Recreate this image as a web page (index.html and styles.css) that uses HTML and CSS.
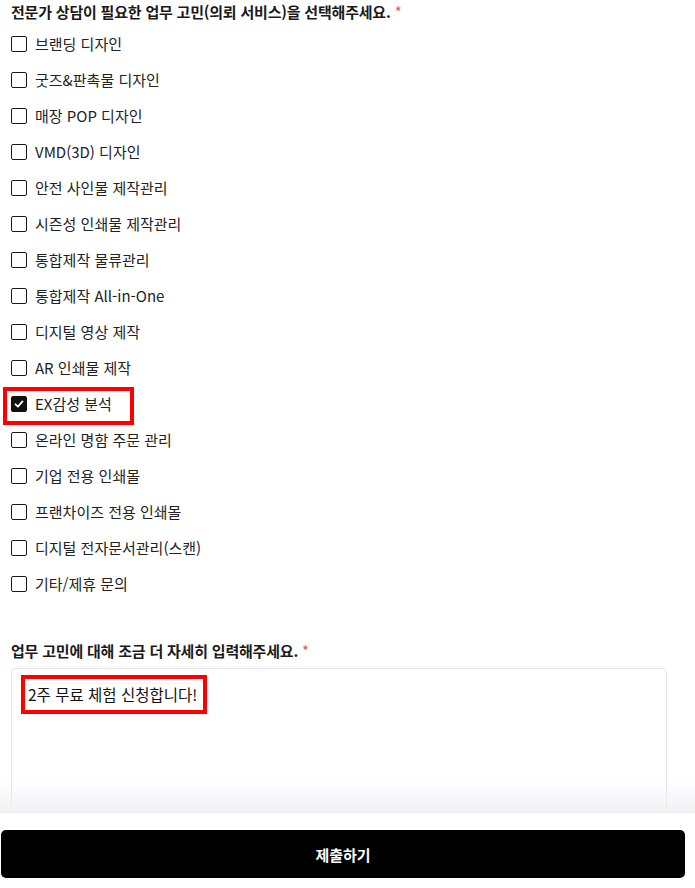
FILE: index.html
```html
<!DOCTYPE html>
<html lang="ko">
<head>
<meta charset="utf-8">
<link rel="stylesheet" href="styles.css">
</head>
<body>
<div class="form">
  <div class="q-title">전문가 상담이 필요한 업무 고민(의뢰 서비스)을 선택해주세요. <span class="req">*</span></div>
  <ul class="options">
    <li class="opt"><span class="box"></span><span class="lbl">브랜딩 디자인</span></li>
    <li class="opt"><span class="box"></span><span class="lbl">굿즈&amp;판촉물 디자인</span></li>
    <li class="opt"><span class="box"></span><span class="lbl">매장 POP 디자인</span></li>
    <li class="opt"><span class="box"></span><span class="lbl">VMD(3D) 디자인</span></li>
    <li class="opt"><span class="box"></span><span class="lbl">안전 사인물 제작관리</span></li>
    <li class="opt"><span class="box"></span><span class="lbl">시즌성 인쇄물 제작관리</span></li>
    <li class="opt"><span class="box"></span><span class="lbl">통합제작 물류관리</span></li>
    <li class="opt"><span class="box"></span><span class="lbl">통합제작 All-in-One</span></li>
    <li class="opt"><span class="box"></span><span class="lbl">디지털 영상 제작</span></li>
    <li class="opt"><span class="box"></span><span class="lbl">AR 인쇄물 제작</span></li>
    <li class="opt marked"><span class="box checked"><svg viewBox="0 0 16 16" width="16" height="16"><path d="M4 8.3 L6.8 11 L12 5" fill="none" stroke="#fff" stroke-width="2" stroke-linecap="round" stroke-linejoin="round"/></svg></span><span class="lbl">EX감성 분석</span></li>
    <li class="opt"><span class="box"></span><span class="lbl">온라인 명함 주문 관리</span></li>
    <li class="opt"><span class="box"></span><span class="lbl">기업 전용 인쇄몰</span></li>
    <li class="opt"><span class="box"></span><span class="lbl">프랜차이즈 전용 인쇄몰</span></li>
    <li class="opt"><span class="box"></span><span class="lbl">디지털 전자문서관리(스캔)</span></li>
    <li class="opt"><span class="box"></span><span class="lbl">기타/제휴 문의</span></li>
  </ul>
  <div class="q-title q2">업무 고민에 대해 조금 더 자세히 입력해주세요. <span class="req">*</span></div>
  <div class="field">
    <span class="typed">2주 무료 체험 신청합니다!</span>
  </div>
</div>
<div class="footer">
  <button class="submit" type="button">제출하기</button>
</div>
</body>
</html>
```
FILE: styles.css
```css
html, body {
  margin: 0;
  padding: 0;
  background: #fff;
}
body {
  font-family: "Noto Sans CJK KR", "Noto Sans", sans-serif;
  color: #222;
  width: 695px;
  height: 888px;
  overflow: hidden;
}
.form {
  padding: 2px 28px 0 11px;
}
.q-title {
  font-size: 15px;
  font-weight: 700;
  line-height: 20px;
  height: 20px;
  color: #1a1a1a;
  letter-spacing: -0.2px;
}
.req {
  color: #f0554f;
  font-weight: 400;
}
.options {
  list-style: none;
  margin: 4px 0 0 0;
  padding: 0;
}
.opt {
  position: relative;
  height: 36px;
  display: flex;
  align-items: center;
  gap: 8px;
}
.box {
  width: 14px;
  height: 14px;
  border: 1px solid #1a1a1a;
  border-radius: 2px;
  background: #fff;
  display: flex;
  align-items: center;
  justify-content: center;
  flex: none;
}
.box.checked {
  background: #111;
  border-color: #111;
}
.box svg {
  display: block;
}
.lbl {
  font-size: 15px;
  line-height: 20px;
  color: #222;
}
.marked::after {
  content: "";
  position: absolute;
  left: -8px;
  top: 1px;
  width: 123px;
  height: 30px;
  border: 4px solid #f00;
}
.q2 {
  margin-top: 39px;
}
.field {
  margin-top: 7px;
  height: 204px;
  border: 1px solid #e4e4ea;
  border-radius: 4px;
  padding: 6px 9px;
}
.typed {
  display: inline-block;
  border: 4px solid #f00;
  padding: 0 6px 0 3px;
  height: 31px;
  line-height: 31px;
  font-size: 15.5px;
  color: #111;
}
.footer {
  position: fixed;
  left: 0;
  right: 0;
  bottom: 0;
  height: 75px;
  background: #fff;
  padding: 17px 10px 0 1px;
  box-sizing: border-box;
}
.footer::before {
  content: "";
  position: absolute;
  left: 0;
  right: 0;
  top: -34px;
  height: 34px;
  background: linear-gradient(rgba(240,240,244,0), rgba(240,240,244,0.9));
}
.submit {
  width: 100%;
  height: 48px;
  border: none;
  border-radius: 5px;
  background: #000;
  color: #fff;
  font-family: "Noto Sans CJK KR", "Noto Sans", sans-serif;
  font-size: 15px;
  font-weight: 700;
  cursor: pointer;
}
```
